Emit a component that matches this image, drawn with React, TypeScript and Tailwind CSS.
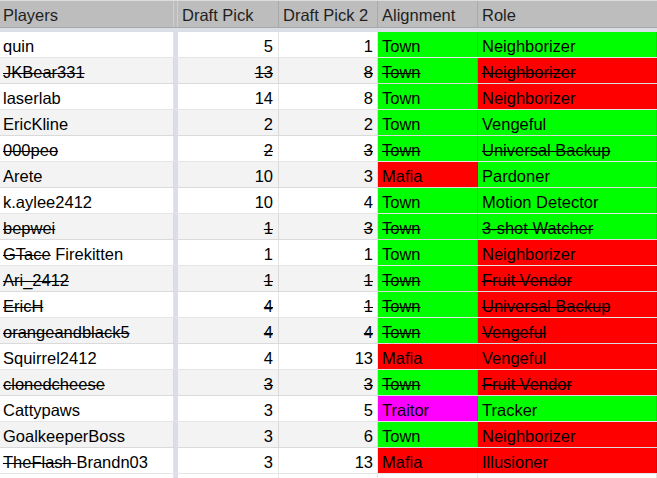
import React from "react";

type Cell = { text: string; pre?: string };
type Row = {
  player: Cell;
  dp: string;
  dp2: string;
  align: string;
  alignBg: string;
  role: string;
  roleBg: string;
  strike: boolean;
};

const G = "bg-[#00ff00]";
const R = "bg-[#ff0000]";
const M = "bg-[#ff00ff]";

const ROWS: Row[] = [
  { player: { text: "quin" }, dp: "5", dp2: "1", align: "Town", alignBg: G, role: "Neighborizer", roleBg: G, strike: false },
  { player: { text: "JKBear331" }, dp: "13", dp2: "8", align: "Town", alignBg: G, role: "Neighborizer", roleBg: R, strike: true },
  { player: { text: "laserlab" }, dp: "14", dp2: "8", align: "Town", alignBg: G, role: "Neighborizer", roleBg: R, strike: false },
  { player: { text: "EricKline" }, dp: "2", dp2: "2", align: "Town", alignBg: G, role: "Vengeful", roleBg: G, strike: false },
  { player: { text: "000peo" }, dp: "2", dp2: "3", align: "Town", alignBg: G, role: "Universal Backup", roleBg: G, strike: true },
  { player: { text: "Arete" }, dp: "10", dp2: "3", align: "Mafia", alignBg: R, role: "Pardoner", roleBg: G, strike: false },
  { player: { text: "k.aylee2412" }, dp: "10", dp2: "4", align: "Town", alignBg: G, role: "Motion Detector", roleBg: G, strike: false },
  { player: { text: "bepwei" }, dp: "1", dp2: "3", align: "Town", alignBg: G, role: "3-shot Watcher", roleBg: G, strike: true },
  { player: { pre: "GTace", text: " Firekitten" }, dp: "1", dp2: "1", align: "Town", alignBg: G, role: "Neighborizer", roleBg: R, strike: false },
  { player: { text: "Ari_2412" }, dp: "1", dp2: "1", align: "Town", alignBg: G, role: "Fruit Vendor", roleBg: R, strike: true },
  { player: { text: "EricH" }, dp: "4", dp2: "1", align: "Town", alignBg: G, role: "Universal Backup", roleBg: R, strike: true },
  { player: { text: "orangeandblack5" }, dp: "4", dp2: "4", align: "Town", alignBg: G, role: "Vengeful", roleBg: R, strike: true },
  { player: { text: "Squirrel2412" }, dp: "4", dp2: "13", align: "Mafia", alignBg: R, role: "Vengeful", roleBg: R, strike: false },
  { player: { text: "clonedcheese" }, dp: "3", dp2: "3", align: "Town", alignBg: G, role: "Fruit Vendor", roleBg: R, strike: true },
  { player: { text: "Cattypaws" }, dp: "3", dp2: "5", align: "Traitor", alignBg: M, role: "Tracker", roleBg: G, strike: false },
  { player: { text: "GoalkeeperBoss" }, dp: "3", dp2: "6", align: "Town", alignBg: G, role: "Neighborizer", roleBg: R, strike: false },
  { player: { pre: "TheFlash ", text: "Brandn03" }, dp: "3", dp2: "13", align: "Mafia", alignBg: R, role: "Illusioner", roleBg: R, strike: false },
];

const cell = "h-full flex items-center pt-[3px] border-r border-black/10 whitespace-pre overflow-hidden";
const strikeCls = (s: boolean) => (s ? "line-through decoration-1" : "");

export default function App() {
  return (
    <div className="w-[657px] h-[478px] overflow-hidden bg-white text-[16.5px] text-black font-['Liberation_Sans',Arial,sans-serif]">
      {/* header */}
      <div className="flex h-[28px] bg-[#bdbdbd] border-t border-[#dcdcdc] border-b border-b-[#a8a8a8] text-[#1f1f1f]">
        <div className="w-[174px] flex items-center pt-[2px] pl-[3px] border-r border-[#cfcfcf]">Players</div>
        <div className="w-[4px] border-r border-[#cfcfcf]" />
        <div className="w-[101px] flex items-center pt-[2px] pl-[4px] border-r border-[#a9a9a9]">Draft Pick</div>
        <div className="w-[99px] flex items-center pt-[2px] pl-[4px] border-r border-[#a9a9a9]">Draft Pick 2</div>
        <div className="w-[100px] flex items-center pt-[2px] pl-[4px] border-r border-[#a9a9a9]">Alignment</div>
        <div className="flex-1 flex items-center pt-[2px] pl-[4px]">Role</div>
      </div>
      {/* frozen row strip */}
      <div className="h-[4px] bg-[#dadfe7]" />
      {ROWS.map((r, i) => (
        <div
          key={i}
          className={`flex h-[26px] border-b border-black/10 ${i % 2 === 1 ? "bg-[#f3f3f3]" : "bg-white"}`}
        >
          <div className={`${cell} w-[174px] pl-[3px]`}>
            {r.player.pre && <span className="line-through decoration-1">{r.player.pre}</span>}
            <span className={strikeCls(r.strike)}>{r.player.text}</span>
          </div>
          <div className="w-[4px] h-full bg-[#dadfe7]" />
          <div className={`${cell} w-[101px] justify-end pr-[5px]`}>
            <span className={strikeCls(r.strike)}>{r.dp}</span>
          </div>
          <div className={`${cell} w-[99px] justify-end pr-[4px]`}>
            <span className={strikeCls(r.strike)}>{r.dp2}</span>
          </div>
          <div className={`${cell} w-[100px] pl-[4px] ${r.alignBg}`}>
            <span className={strikeCls(r.strike)}>{r.align}</span>
          </div>
          <div className={`${cell} flex-1 pl-[4px] ${r.roleBg}`}>
            <span className={strikeCls(r.strike)}>{r.role}</span>
          </div>
        </div>
      ))}
      {/* empty trailing row */}
      <div className="flex h-[26px] bg-white">
        <div className={`${cell} w-[174px]`} />
        <div className="w-[4px] h-full bg-[#dadfe7]" />
        <div className={`${cell} w-[101px]`} />
        <div className={`${cell} w-[99px]`} />
        <div className={`${cell} w-[100px]`} />
        <div className={`${cell} flex-1`} />
      </div>
    </div>
  );
}
